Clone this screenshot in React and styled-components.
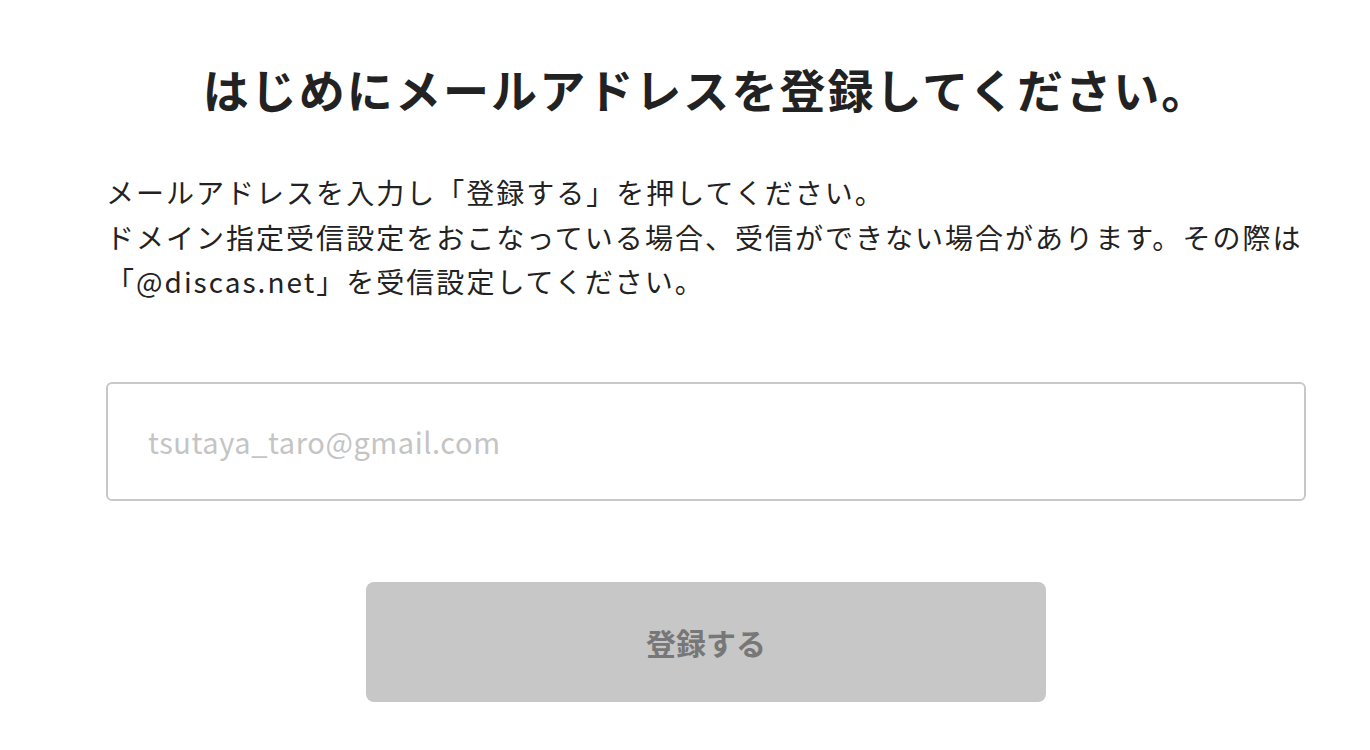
import React from "react";
import styled, { createGlobalStyle } from "styled-components";

const GlobalStyle = createGlobalStyle`
  html, body { margin: 0; padding: 0; background: #fff; }
  body {
    font-family: "Noto Sans CJK JP", "Noto Sans", sans-serif;
    color: #222;
  }
`;

const Page = styled.main`
  width: 1200px;
  padding: 55px 0 40px 106px;
  display: flex;
  flex-direction: column;
`;

const Title = styled.h1`
  margin: 0;
  font-size: 46px;
  line-height: 66px;
  font-weight: 700;
  letter-spacing: 0.045em;
  text-align: center;
  color: #222;
`;

const Lead = styled.p`
  margin: 49px 0 0;
  font-size: 28px;
  line-height: 44.5px;
  letter-spacing: 0.072em;
  color: #222;
`;

const EmailInput = styled.input`
  box-sizing: border-box;
  margin-top: 78px;
  width: 1200px;
  height: 119px;
  border: 2px solid #c8c8c8;
  border-radius: 6px;
  padding: 0 40px;
  font-family: inherit;
  font-size: 29px;
  letter-spacing: 0.02em;
  color: #222;
  outline: none;
  &::placeholder { color: #c4c4c4; }
`;

const SubmitButton = styled.button`
  align-self: center;
  margin-top: 81px;
  width: 680px;
  height: 120px;
  border: none;
  border-radius: 8px;
  background: #c7c7c7;
  color: #777;
  font-family: inherit;
  font-size: 30px;
  font-weight: 700;
  letter-spacing: 0;
  cursor: default;
`;

export default function App() {
  return (
    <>
      <GlobalStyle />
      <Page>
        <Title>はじめにメールアドレスを登録してください。</Title>
        <Lead>
          メールアドレスを入力し「登録する」を押してください。
          <br />
          ドメイン指定受信設定をおこなっている場合、受信ができない場合があります。その際は
          <br />
          「@discas.net」を受信設定してください。
        </Lead>
        <EmailInput type="email" placeholder="tsutaya_taro@gmail.com" />
        <SubmitButton type="button" disabled>登録する</SubmitButton>
      </Page>
    </>
  );
}
